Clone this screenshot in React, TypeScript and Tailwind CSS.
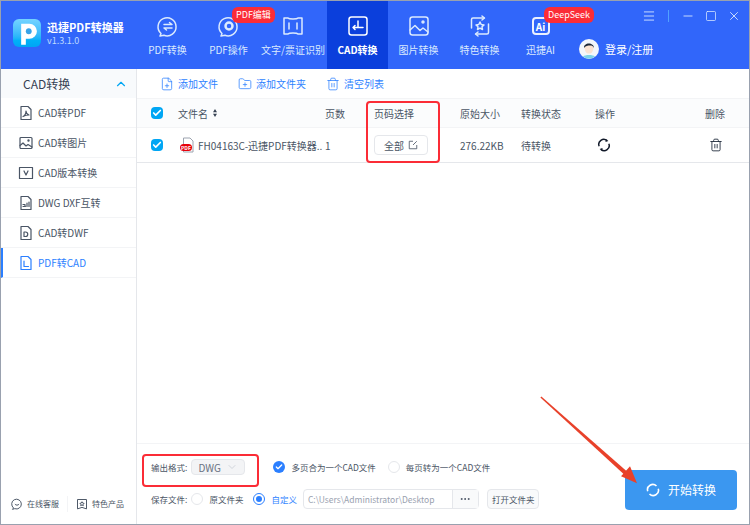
import { ChevronDown, ChevronUp, FilePlus, FolderPlus, Menu, Minus, Square, X, Check, Trash2, MoreHorizontal } from 'lucide-react'
import type { ReactNode } from 'react'

const font = { fontFamily: '"Noto Sans CJK SC", "Noto Sans", sans-serif' }
const columns = 'grid grid-cols-[41px_147px_49px_86px_61px_74px_110px_1fr] items-center'

function TabIcon({ children }: { children: ReactNode }) {
  return (
    <svg viewBox="0 0 24 24" className="h-6 w-6" fill="none" stroke="currentColor" strokeWidth="1.5" strokeLinecap="round" strokeLinejoin="round">
      {children}
    </svg>
  )
}

const tabs = [
  {
    label: 'PDF转换',
    width: 'w-[61px]',
    icon: (
      <TabIcon>
        <path d="M5 19.500a9 9 0 1 1 3 1.800L4 22z" />
        <path d="M8 10.500h8l-2.500-2M16 14H8l2.500 2" />
      </TabIcon>
    ),
  },
  {
    label: 'PDF操作',
    width: 'w-[61px]',
    badge: 'PDF编辑',
    icon: (
      <TabIcon>
        <path d="M5 19.500a9 9 0 1 1 3 1.800L4 22z" />
        <circle cx="12" cy="12" r="3.500" strokeWidth="2.500" />
      </TabIcon>
    ),
  },
  {
    label: '文字/票证识别',
    width: 'w-[68px]',
    icon: (
      <TabIcon>
        <path d="M3 4h4c1 1.200 9 1.200 10 0h4v16h-4c-1-1.200-9-1.200-10 0H3z" />
        <path d="M8 9v6M16 9v6" />
      </TabIcon>
    ),
  },
  {
    label: 'CAD转换',
    width: 'w-[61px]',
    active: true,
    icon: (
      <TabIcon>
        <rect x="3" y="3" width="18" height="18" rx="2.500" />
        <path d="M12 7v6.500H7M9 11.500l-2 2 2 2M12 13.500h5" />
      </TabIcon>
    ),
  },
  {
    label: '图片转换',
    width: 'w-[61px]',
    icon: (
      <TabIcon>
        <rect x="3" y="3" width="18" height="18" rx="2.500" />
        <path d="M3 16l5-4.500 5 5 3-2.500 5 4" />
        <circle cx="16" cy="8" r="1" fill="currentColor" />
      </TabIcon>
    ),
  },
  {
    label: '特色转换',
    width: 'w-[61px]',
    icon: (
      <TabIcon>
        <path d="M16 4H5a1.500 1.500 0 0 0-1.500 1.500V14M8 20h11a1.500 1.500 0 0 0 1.500-1.500V10" />
        <path d="M14 2l2.500 2L14 6M10 18l-2.500 2 2.500 2" />
        <path d="M12 8l1.200 2.500 2.800.4-2 1.900.5 2.700-2.500-1.300-2.500 1.300.5-2.700-2-1.900 2.800-.4z" />
      </TabIcon>
    ),
  },
  {
    label: '迅捷AI',
    width: 'w-[61px]',
    badge: 'DeepSeek',
    icon: (
      <div className="flex h-[18px] w-[18px] items-center justify-center rounded-sm border-2 border-white/90 text-[10px] font-bold text-white">Ai</div>
    ),
  },
]

function SideIcon({ children }: { children: ReactNode }) {
  return (
    <svg viewBox="0 0 16 16" className="h-4 w-4 shrink-0" fill="none" stroke="currentColor" strokeWidth="1.2" strokeLinejoin="round" strokeLinecap="round">
      {children}
    </svg>
  )
}

const filePath = 'M3 1.500h7l3 3v10H3z'

const sideItems = [
  { label: 'CAD转PDF', icon: <SideIcon><path d={filePath} /><path d="M5 11.500c2-1 3-3.500 3-5.500 0 2 1 3.500 3 4-2 0-4 .5-6 1.500z" /></SideIcon> },
  { label: 'CAD转图片', icon: <SideIcon><rect x="2" y="2.500" width="12" height="11" rx="1" /><path d="M2 10.500l3-2.500 3 3 2-1.500 4 2.500" /><circle cx="10.500" cy="5.500" r=".6" /></SideIcon> },
  { label: 'CAD版本转换', icon: <SideIcon><rect x="1.500" y="2.500" width="13" height="11" /><path d="M6 6l2 4 2-4" /></SideIcon> },
  { label: 'DWG DXF互转', icon: <SideIcon><path d={filePath} /><path d="M5 11.500h2.500M5 9.500h2v2M9 11.500V8M11 11.500V7" /></SideIcon> },
  { label: 'CAD转DWF', icon: <SideIcon><path d={filePath} /><path d="M6 7h1.500a2 2 0 0 1 0 4.500H6z" /></SideIcon> },
  { label: 'PDF转CAD', active: true, icon: <SideIcon><path d={filePath} /><path d="M6 6v5.500h4.500" /></SideIcon> },
]

// two open arcs with small heads, used by the retry action
function LoopIcon({ className }: { className: string }) {
  return (
    <svg viewBox="0 0 16 16" className={className} fill="none" stroke="currentColor" strokeWidth="1.700">
      <path d="M2.500 9.500A5.700 5.700 0 0 1 11.500 3" />
      <path d="M13.500 6.500A5.700 5.700 0 0 1 4.500 13" />
      <path d="M10 1.200l3 2.200-3.300 1.200z" fill="currentColor" stroke="none" />
      <path d="M6 14.800l-3-2.200 3.300-1.200z" fill="currentColor" stroke="none" />
    </svg>
  )
}

function PdfIcon() {
  return (
    <div className="relative h-4 w-4 shrink-0">
      <svg viewBox="0 0 16 16" className="h-4 w-4" fill="none" stroke="#9ca3af" strokeWidth="1">
        <path d="M3.500 1h6.500l3 3v11h-9.500z" fill="#fff" />
      </svg>
      <div className="absolute bottom-0.5 left-0 rounded-sm bg-red-600 px-px text-[5px] leading-[7px] font-bold text-white">PDF</div>
    </div>
  )
}

function Radio({ checked }: { checked?: boolean }) {
  return (
    <div className={`flex h-3 w-3 items-center justify-center rounded-full border bg-white ${checked ? 'border-blue-500' : 'border-gray-200'}`}>
      {checked && <div className="h-1.5 w-1.5 rounded-full bg-blue-500" />}
    </div>
  )
}

function Checkbox() {
  return (
    <div className="flex h-3 w-3 items-center justify-center rounded-sm bg-sky-500">
      <Check className="h-2.5 w-2.5 text-white" strokeWidth={4} />
    </div>
  )
}

export default function App() {
  return (
    <div style={font} className="relative flex h-[525px] w-[750px] flex-col overflow-hidden border border-gray-400 bg-white text-[10px] text-gray-600">
      {/* Header */}
      <header className="flex h-[68px] shrink-0 bg-[#3166fa] text-white">
        <div className="flex w-34 shrink-0 items-center gap-1.5 pb-1 pl-3">
          <div className="flex h-7 w-7 items-center justify-center rounded-md bg-gradient-to-b from-sky-300 to-sky-500">
            <svg viewBox="0 0 24 24" className="h-7 w-7">
              <path d="M7 22V4h7a6.500 6.500 0 0 1 0 13h-3v5z" fill="#fff" />
              <circle cx="13.500" cy="10.500" r="2.500" fill="#38a3e8" />
            </svg>
          </div>
          <div className="flex flex-col">
            <span className="text-[11px] leading-4 font-bold whitespace-nowrap">迅捷PDF转换器</span>
            <span className="text-[9px] leading-3 text-blue-200">v1.3.1.0</span>
          </div>
        </div>
        {tabs.map((tab) => (
          <div key={tab.label} className={`relative flex ${tab.width} flex-col items-center justify-center gap-1.5 ${tab.active ? 'bg-[#0b3fdc] font-bold text-white' : 'text-blue-100'}`}>
            <div className="flex h-6 items-center">{tab.icon}</div>
            <span className="leading-3 whitespace-nowrap">{tab.label}</span>
            {tab.badge && (
              <span className="absolute top-1.5 left-[34px] rounded-md bg-red-500 px-1 text-[9px] leading-4 whitespace-nowrap text-white">{tab.badge}</span>
            )}
          </div>
        ))}
        <div className="relative flex flex-1 items-center pt-7 pl-2">
          <div className="flex items-center gap-1.5">
            <svg viewBox="0 0 20 20" className="h-5 w-5">
              <circle cx="10" cy="10" r="10" fill="#f4f7fb" />
              <path d="M5.500 8.500c0-4 9-4 9 0-.5 4-1.500 6-4.500 6s-4-2-4.500-6z" fill="#fbe3d2" />
              <path d="M5 9c-.5-6 10-6 10 0-1-2-2-2.500-4-2.500S6 7 5 9z" fill="#1f2937" />
              <path d="M4 17.500c2-2 10-2 12 0a10 10 0 0 1-12 0z" fill="#7dd3e8" />
            </svg>
            <span className="text-[11px] whitespace-nowrap">登录/注册</span>
          </div>
          <div className="absolute top-2 right-2 flex items-center gap-2.5 text-blue-100">
            <Menu className="h-3.5 w-3.5" strokeWidth={1.5} />
            <div className="mx-0.5 h-3 w-px bg-blue-400" />
            <Minus className="h-3.5 w-3.5" strokeWidth={1.5} />
            <Square className="h-3 w-3" strokeWidth={1.5} />
            <X className="h-3.5 w-3.5" strokeWidth={1.5} />
          </div>
        </div>
      </header>

      <div className="flex min-h-0 flex-1">
        {/* Sidebar */}
        <aside className="flex w-34 shrink-0 flex-col border-r border-gray-200 bg-white">
          <div className="flex h-[29px] items-center justify-between bg-slate-50 pr-2 pl-[22px] text-xs text-gray-700">
            CAD转换
            <ChevronUp className="h-3.5 w-3.5 text-sky-500" />
          </div>
          {sideItems.map((item) => (
            <div key={item.label} className={`flex h-7.5 items-center gap-1 border-b border-gray-100 ${item.active ? 'border-l-2 border-l-blue-500 pl-[15px] text-blue-500' : 'pl-[17px] text-gray-600'}`}>
              {item.icon}
              <span className="whitespace-nowrap">{item.label}</span>
            </div>
          ))}
          <div className="mt-auto mb-3 flex items-center gap-2 pl-2.5 text-[8px]">
            <div className="flex items-center gap-1">
              <svg viewBox="0 0 16 16" className="h-3 w-3" fill="none" stroke="currentColor" strokeWidth="1.300" strokeLinecap="round">
                <path d="M3 13a6.500 6.500 0 1 1 2 1.200L2.500 15z" />
                <path d="M5.500 8.500c1 1.500 4 1.500 5 0" />
              </svg>
              在线客服
            </div>
            <div className="h-4 w-px bg-gray-100" />
            <div className="flex items-center gap-1">
              <svg viewBox="0 0 16 16" className="h-3 w-3" fill="none" stroke="currentColor" strokeWidth="1.300" strokeLinejoin="round">
                <path d="M2 2h12v12.500L8 12.500l-6 2z" />
                <path d="M8 5l1 1.800 1.800.3-1.300 1.300.3 1.800L8 9.300l-1.800.9.300-1.800-1.300-1.300 1.800-.3z" />
              </svg>
              特色产品
            </div>
          </div>
        </aside>

        {/* Main */}
        <main className="flex min-w-0 flex-1 flex-col">
          <div className="flex h-[29px] items-center gap-5 pl-[23px] text-blue-500">
            <div className="flex items-center gap-1"><FilePlus className="h-3.5 w-3.5" strokeWidth={1.3} />添加文件</div>
            <div className="flex items-center gap-1"><FolderPlus className="h-3.5 w-3.5" strokeWidth={1.3} />添加文件夹</div>
            <div className="flex items-center gap-1"><Trash2 className="h-3.5 w-3.5" strokeWidth={1.3} />清空列表</div>
          </div>

          <div className={`${columns} h-[30px] border-y border-gray-100 bg-gray-50/60`}>
            <div className="pl-3.5"><Checkbox /></div>
            <div className="flex items-center gap-1">
              文件名
              <svg viewBox="0 0 6 10" className="h-2 w-1.5 text-gray-700" fill="currentColor"><path d="M3 0l2.500 4h-5zM3 10L.5 6h5z" /></svg>
            </div>
            <div>页数</div>
            <div>页码选择</div>
            <div>原始大小</div>
            <div>转换状态</div>
            <div>操作</div>
            <div>删除</div>
          </div>

          <div className={`${columns} h-[35px] border-b border-gray-200`}>
            <div className="pl-3.5"><Checkbox /></div>
            <div className="ml-0.5 flex items-center gap-0.5 whitespace-nowrap"><PdfIcon />FH04163C-迅捷PDF转换器..</div>
            <div>1</div>
            <div>
              <div className="flex h-5 w-[54px] items-center justify-center gap-1 rounded-sm border border-gray-200">全部
                <svg viewBox="0 0 12 12" className="h-2.5 w-2.5" fill="none" stroke="currentColor" strokeWidth="1"><path d="M6 1.500H1.500v9h9V6M6 6l4.500-4.500" /></svg>
              </div>
            </div>
            <div>276.22KB</div>
            <div>待转换</div>
            <div><LoopIcon className="ml-0.5 h-3.5 w-3.5 text-gray-900" /></div>
            <div><Trash2 className="ml-1 h-3.5 w-3.5 text-gray-800" strokeWidth={1.5} /></div>
          </div>

          {/* Bottom panel */}
          <div className="mt-auto flex h-[81px] items-center justify-between border-t border-gray-100 pr-3 pl-3.5 text-[8.5px]">
            <div className="flex flex-col gap-3.5">
              <div className="flex items-center">
                <span>输出格式:</span>
                <div className="ml-1 flex h-4 w-[54px] items-center justify-between rounded-sm border border-gray-200 bg-gray-100 px-1.5 text-[10px] text-gray-500">
                  DWG
                  <ChevronDown className="h-3 w-3 text-gray-300" />
                </div>
                <div className="ml-7 flex h-3 w-3 items-center justify-center rounded-full bg-blue-500"><Check className="h-2 w-2 text-white" strokeWidth={4} /></div>
                <span className="ml-1.5">多页合为一个CAD文件</span>
                <div className="ml-3"><Radio /></div>
                <span className="ml-1.5">每页转为一个CAD文件</span>
              </div>
              <div className="flex items-center">
                <span>保存文件:</span>
                <div className="ml-1"><Radio /></div>
                <span className="ml-1.5">原文件夹</span>
                <div className="ml-2.5"><Radio checked /></div>
                <span className="ml-1.5 text-blue-500">自定义</span>
                <div className="ml-1.5 flex h-5 w-[176px] items-center rounded-sm border border-gray-200">
                  <span className="flex-1 pl-1 text-gray-400">C:\Users\Administrator\Desktop</span>
                  <div className="flex h-full w-[26px] items-center justify-center border-l border-gray-200 bg-gray-50">
                    <MoreHorizontal className="h-3 w-3" />
                  </div>
                </div>
                <div className="ml-2 flex h-5 items-center rounded-sm border border-gray-200 bg-gray-50 px-1">打开文件夹</div>
              </div>
            </div>
            <div className="mt-3 flex h-10 w-28 shrink-0 items-center justify-center gap-2 rounded-sm bg-[#3b97f0] text-xs text-white">
              <svg viewBox="0 0 16 16" className="h-3.5 w-3.5" fill="none" stroke="currentColor" strokeWidth="1.800">
                <path d="M2 9.500A6 6 0 0 1 12 3.500" />
                <path d="M14 6.500A6 6 0 0 1 4 12.500" />
              </svg>
              开始转换
            </div>
          </div>
        </main>
      </div>

      {/* Annotations */}
      <div className="absolute top-[100px] left-[365px] h-[62px] w-[74px] rounded border-2 border-red-500" />
      <div className="absolute top-[453px] left-[141px] h-[33px] w-[117px] rounded border-2 border-red-500" />
      <svg viewBox="0 0 750 525" className="absolute inset-0 h-full w-full" fill="none">
        <path d="M541 398L542 397L630 474L627 477z" fill="#e8412a" />
        <path d="M638 484L622 477L631 467z" fill="#e8412a" />
      </svg>
    </div>
  )
}
